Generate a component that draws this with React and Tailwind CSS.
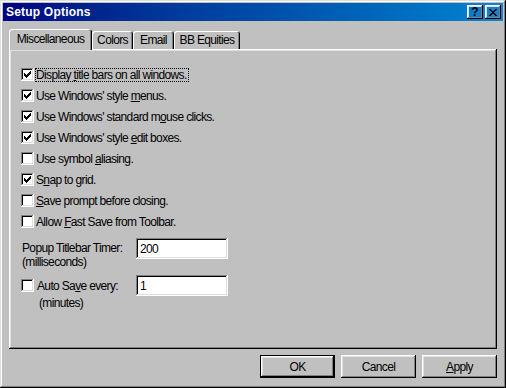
import React from "react";

const raised =
  "shadow-[inset_-1px_-1px_0_#000,inset_1px_1px_0_#fff,inset_-2px_-2px_0_#808080,inset_2px_2px_0_#dfdfdf]";
const sunken =
  "shadow-[inset_-1px_-1px_0_#fff,inset_1px_1px_0_#808080,inset_-2px_-2px_0_#dfdfdf,inset_2px_2px_0_#000]";

const CHECK = [
  [6, 0], [5, 1], [6, 1], [0, 2], [4, 2], [5, 2], [6, 2],
  [0, 3], [1, 3], [3, 3], [4, 3], [5, 3],
  [0, 4], [1, 4], [2, 4], [3, 4], [4, 4],
  [1, 5], [2, 5], [3, 5], [2, 6],
];

const CLOSE = [
  [0, 0], [1, 0], [6, 0], [7, 0],
  [1, 1], [2, 1], [5, 1], [6, 1],
  [2, 2], [3, 2], [4, 2], [5, 2],
  [3, 3], [4, 3],
  [2, 4], [3, 4], [4, 4], [5, 4],
  [1, 5], [2, 5], [5, 5], [6, 5],
  [0, 6], [1, 6], [6, 6], [7, 6],
];

const Pixels = ({ w, h, dots }) => (
  <svg width={w} height={h} viewBox={`0 0 ${w} ${h}`} shapeRendering="crispEdges">
    {dots.map(([x, y]) => (
      <rect key={`${x}-${y}`} x={x} y={y} width="1" height="1" fill="#000" />
    ))}
  </svg>
);

const Checkbox = ({ checked }) => (
  <span className={`w-[13px] h-[13px] shrink-0 bg-white flex items-center justify-center ${sunken}`}>
    {checked && <Pixels w={7} h={7} dots={CHECK} />}
  </span>
);

const options = [
  { checked: true, focus: true, label: <>Display <u>t</u>itle bars on all windows.</> },
  { checked: true, label: <>Use Windows' style <u>m</u>enus.</> },
  { checked: true, label: <>Use Windows' standard m<u>o</u>use clicks.</> },
  { checked: true, label: <>Use Windows' style <u>e</u>dit boxes.</> },
  { checked: false, label: <>Use symbol <u>a</u>liasing.</> },
  { checked: true, label: <>S<u>n</u>ap to grid.</> },
  { checked: false, label: <><u>S</u>ave prompt before closing.</> },
  { checked: false, label: <>Allow <u>F</u>ast Save from Toolbar.</> },
];

const tabs = [
  { name: "Miscellaneous", w: "w-[83px]", active: true },
  { name: "Colors", w: "w-[41px]" },
  { name: "Email", w: "w-[41px]" },
  { name: "BB Equities", w: "w-[66px]" },
];

const TextBox = ({ value }) => (
  <div className={`w-[92px] h-[21px] bg-white flex items-center pl-[4px] ${sunken}`}>
    {value}
  </div>
);

const Button = ({ children, isDefault }) => (
  <div
    className={`w-[75px] h-[23px] flex items-center justify-center ${
      isDefault ? "border border-black" : ""
    }`}
  >
    <div className={`w-full h-full flex items-center justify-center ${raised}`}>{children}</div>
  </div>
);

const App = () => {
  return (
    <div className="w-[506px] h-[388px] bg-[#c0c0c0] p-[3px] text-black text-[12px] leading-[14px] tracking-[-0.65px] font-['Liberation_Sans',Arial,sans-serif] shadow-[inset_-1px_-1px_0_#000,inset_1px_1px_0_#dfdfdf,inset_-2px_-2px_0_#808080,inset_2px_2px_0_#fff]">
      {/* title bar */}
      <div className="h-[18px] flex items-center bg-linear-to-r from-[#000080] to-[#1084d0] pl-[3px] pr-[2px]">
        <span className="flex-1 text-white font-bold text-[12px] tracking-[0.2px]">Setup Options</span>
        <div className={`w-[16px] h-[14px] mr-[2px] flex items-center justify-center font-bold text-[12px] leading-none tracking-normal ${raised}`}>
          ?
        </div>
        <div className={`w-[16px] h-[14px] flex items-center justify-center ${raised}`}>
          <Pixels w={8} h={7} dots={CLOSE} />
        </div>
      </div>

      {/* tabs */}
      <div className="mt-[8px] ml-[6px] h-[20px] flex items-end">
        {tabs.map((t) => (
          <div
            key={t.name}
            className={`${t.w} flex items-center justify-center rounded-t-[3px] bg-[#c0c0c0] ${
              t.active
                ? "h-[21px] -mb-px relative z-10 pb-px shadow-[inset_1px_1px_0_#fff,inset_-1px_0_0_#000,inset_-2px_0_0_#808080]"
                : "h-[18px] shadow-[inset_1px_1px_0_#fff,inset_-1px_0_0_#000,inset_-2px_0_0_#808080]"
            }`}
          >
            {t.name}
          </div>
        ))}
      </div>

      {/* panel */}
      <div className={`mx-[6px] h-[300px] pt-[15px] pl-[12px] ${raised}`}>
        <div className="flex flex-col">
          {options.map((o, i) => (
            <div key={i} className="h-[21px] flex items-center">
              <Checkbox checked={o.checked} />
              <span
                className={`ml-[1px] h-[14px] leading-[12px] pr-[1px] border whitespace-pre ${
                  o.focus ? "border-dotted border-black" : "border-transparent"
                }`}
              >
                {o.label}
              </span>
            </div>
          ))}
        </div>

        <div className="mt-[6px] flex">
          <div className="w-[115px] pl-[1px] pt-[3px]">
            <div>Popup Titlebar Timer:</div>
            <div>(milliseconds)</div>
          </div>
          <TextBox value="200" />
        </div>

        <div className="mt-[6px] flex">
          <div className="w-[115px]">
            <div className="h-[21px] flex items-center">
              <Checkbox checked={false} />
              <span className="ml-[3px] whitespace-pre">
                Auto Sa<u>v</u>e every:
              </span>
            </div>
            <div className="pl-[18px]">(minutes)</div>
          </div>
          <TextBox value="1" />
        </div>
      </div>

      {/* buttons */}
      <div className="mt-[6px] pr-[6px] flex justify-end gap-[6px]">
        <Button isDefault>OK</Button>
        <Button>Cancel</Button>
        <Button>
          <span>
            <u>A</u>pply
          </span>
        </Button>
      </div>
    </div>
  );
};

export default App;
